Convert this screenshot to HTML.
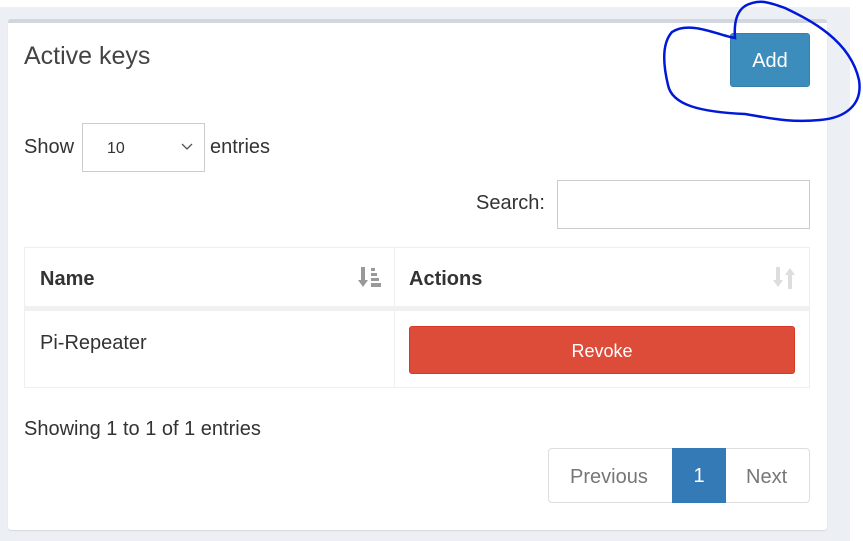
<!DOCTYPE html>
<html><head><style>
body{margin:0;width:863px;height:541px;background:#fff;position:relative;overflow:hidden;font-family:"Liberation Sans",sans-serif;color:#333}
.bg{position:absolute;left:0;top:7px;width:850px;height:534px;background:#ecf0f5}
.box{position:absolute;left:8px;top:19px;width:819px;height:511px;background:#fff;border-top:4px solid #d2d6de;border-radius:3px;box-sizing:border-box;box-shadow:0 1px 1px rgba(0,0,0,.1)}
.a{position:absolute}
.t{font-size:25px;color:#444;left:24px;top:42px}
.add{left:730px;top:33px;width:80px;height:54px;background:#3c8dbc;border:1px solid #367fa9;border-radius:3px;box-sizing:border-box;color:#fff;font-size:20px;text-align:center;line-height:54px}
.lbl{font-size:20px}
.sel{left:82px;top:123px;width:123px;height:49px;border:1px solid #ccc;box-sizing:border-box;font-size:16px;padding:16px 0 0 24px}
.srch{left:557px;top:180px;width:253px;height:49px;border:1px solid #ccc;box-sizing:border-box}
.tbl{left:24px;top:247px;width:786px;height:141px;border:1px solid #eee;box-sizing:border-box}
.th{font-size:20px;font-weight:bold;top:268px}
.sep{left:25px;top:306px;width:784px;height:5px;background:#f0f0f0}
.vl{left:394px;top:247px;width:1px;height:141px;background:#eee}
.rev{left:409px;top:326px;width:386px;height:48px;background:#dd4b39;border:1px solid #d73925;border-radius:3px;box-sizing:border-box;color:#fff;font-size:18px;text-align:center;line-height:48px}
.pg{left:548px;top:448px;width:262px;height:55px;border:1px solid #ddd;border-radius:4px;box-sizing:border-box;font-size:20px;color:#777}
</style></head><body>
<div class="bg"></div>
<div class="box"></div>
<div class="a t">Active keys</div>
<div class="a add">Add</div>
<svg class="a" style="left:660px;top:0" width="203" height="124"><path d="M75 38 C74 25 76 12 85 6 C100 -2 110 3 125 8 C150 20 190 40 199 80 C203 105 185 118 160 120 C130 123 110 118 85 114 C40 112 12 105 8 85 C2 60 3 42 12 32 C30 20 60 36 75 38 Z" fill="none" stroke="#0018d8" stroke-width="2.5"/></svg>
<div class="a lbl" style="left:24px;top:136px">Show</div>
<div class="a sel">10<svg style="position:absolute;left:98px;top:19px" width="12" height="8"><path d="M1 1l5 5 5-5" stroke="#555" stroke-width="1.3" fill="none"/></svg></div>
<div class="a lbl" style="left:210px;top:136px">entries</div>
<div class="a lbl" style="left:476px;top:192px">Search:</div>
<div class="a srch"></div>
<div class="a tbl"></div>
<div class="a vl"></div>
<div class="a sep"></div>
<div class="a th" style="left:40px">Name</div>
<div class="a th" style="left:409px">Actions</div>
<svg class="a" style="left:358px;top:266px" width="24" height="24"><path d="M5 1v17" stroke="#999" stroke-width="4" fill="none"/><path d="M0 14h10l-5 7z" fill="#999"/><rect x="13" y="2" width="4" height="3" fill="#999"/><rect x="13" y="7" width="6" height="3" fill="#999"/><rect x="13" y="12" width="8" height="3" fill="#999"/><rect x="13" y="17" width="10" height="4" fill="#999"/></svg>
<svg class="a" style="left:772px;top:266px" width="24" height="24"><path d="M6 1v16M18 23V7" stroke="#ddd" stroke-width="4" fill="none"/><path d="M1 14h10l-5 7zM13 9h10l-5-7z" fill="#ddd"/></svg>
<div class="a lbl" style="left:40px;top:332px">Pi-Repeater</div>
<div class="a rev">Revoke</div>
<div class="a lbl" style="left:24px;top:418px">Showing 1 to 1 of 1 entries</div>
<div class="a pg">
<span style="position:absolute;left:21px;top:17px">Previous</span>
<div style="position:absolute;left:123px;top:-1px;width:54px;height:55px;background:#337ab7;color:#fff;text-align:center;line-height:57px">1</div>
<span style="position:absolute;left:197px;top:17px">Next</span>
</div>
</body></html>
